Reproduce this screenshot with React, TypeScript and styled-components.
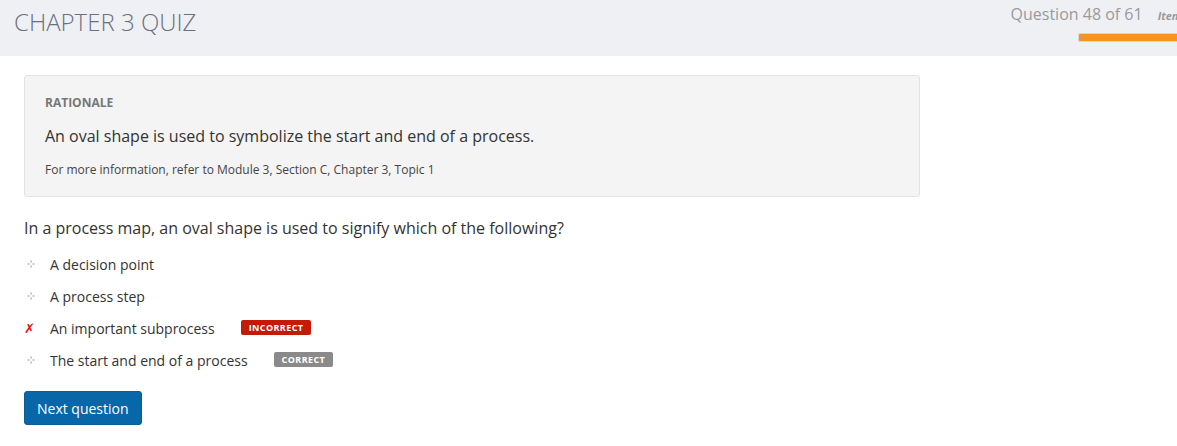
import React from "react";
import styled, { createGlobalStyle } from "styled-components";

const Global = createGlobalStyle`
  html, body { margin: 0; padding: 0; background: #fff; }
  body { font-family: "Open Sans", "Liberation Sans", Arial, sans-serif; color: #333; }
  * { box-sizing: border-box; }
`;

const Header = styled.header`
  height: 56px;
  background: #eff0f4;
  display: flex;
  justify-content: space-between;
  align-items: flex-start;
  overflow: hidden;
`;

const Title = styled.h1`
  margin: 6px 0 0 14px;
  font-size: 24px;
  line-height: 32px;
  font-weight: 300;
  color: #6b7080;
  letter-spacing: 0;
`;

const Progress = styled.div`
  display: flex;
  flex-direction: column;
  align-items: flex-end;
  padding-top: 3px;
`;

const ProgressText = styled.div`
  display: flex;
  align-items: baseline;
  gap: 15px;
  white-space: nowrap;
  margin-right: -10px;
`;

const Count = styled.span`
  font-size: 16px;
  line-height: 22px;
  color: #9a9a9a;
`;

const Items = styled.span`
  font-size: 11px;
  font-style: italic;
  font-weight: 700;
  color: #9a9a9a;
`;

const Track = styled.div`
  margin-top: 8px;
  width: 99px;
  height: 9px;
  border: 1px solid #d6d7da;
  border-right: none;
  border-radius: 2px 0 0 2px;
  background: #f7941d;
`;

const Main = styled.main`
  padding: 19px 24px 0;
`;

const Rationale = styled.section`
  width: 896px;
  background: #f4f4f4;
  border: 1px solid #e2e2e2;
  border-radius: 3px;
  padding: 18px 20px 17px 20px;
`;

const Label = styled.div`
  font-size: 12px;
  line-height: 18px;
  font-weight: 700;
  color: #777;
`;

const Explanation = styled.p`
  margin: 12px 0 0;
  font-size: 16px;
  line-height: 24px;
  color: #333;
`;

const Reference = styled.p`
  margin: 13px 0 0;
  font-size: 12px;
  line-height: 18px;
  color: #444;
`;

const Question = styled.p`
  margin: 19px 0 0;
  font-size: 16px;
  line-height: 24px;
  color: #333;
`;

const Options = styled.ul`
  list-style: none;
  margin: 14px 0 0;
  padding: 0;
  display: flex;
  flex-direction: column;
  gap: 12px;
`;

const Option = styled.li`
  display: flex;
  align-items: center;
  height: 20px;
  font-size: 14px;
  color: #333;
`;

const Marker = styled.span<{ $cross?: boolean }>`
  width: 26px;
  display: flex;
  align-items: center;
  padding-left: ${(p) => (p.$cross ? "0" : "3px")};
`;

const CrossGlyph = styled.span`
  font-family: "DejaVu Sans", sans-serif;
  font-size: 13px;
  line-height: 1;
  color: #e0140a;
  font-weight: 700;
`;

const Badge = styled.span<{ $tone: "bad" | "good" }>`
  display: inline-flex;
  align-items: center;
  justify-content: center;
  height: 15px;
  padding: 0 8px;
  margin-left: 26px;
  margin-bottom: 1px;
  border-radius: 2px;
  background: ${(p) => (p.$tone === "bad" ? "#c41a0a" : "#8a8a8a")};
  color: #fff;
  font-size: 9px;
  font-weight: 700;
  letter-spacing: 0.4px;
`;

const NextButton = styled.button`
  margin-top: 21px;
  height: 34px;
  padding: 0 12px;
  background: #0767a9;
  border: 1px solid #0b5b94;
  border-radius: 3px;
  color: #fff;
  font-family: inherit;
  font-size: 14px;
  cursor: pointer;
`;

const Dots = () => (
  <svg width="8" height="8" viewBox="0 0 8 8">
    <rect x="3" y="0.5" width="2" height="2" fill="#c8c8c8" />
    <rect x="0.5" y="3" width="2" height="2" fill="#c8c8c8" />
    <rect x="5.5" y="3" width="2" height="2" fill="#c8c8c8" />
    <rect x="3" y="5.5" width="2" height="2" fill="#c8c8c8" />
  </svg>
);

type Opt = { text: string; state?: "bad" | "good" };
const options: Opt[] = [
  { text: "A decision point" },
  { text: "A process step" },
  { text: "An important subprocess", state: "bad" },
  { text: "The start and end of a process", state: "good" },
];

export default function App() {
  return (
    <>
      <Global />
      <Header>
        <Title>CHAPTER 3 QUIZ</Title>
        <Progress>
          <ProgressText>
            <Count>Question 48 of 61</Count>
            <Items>Items</Items>
          </ProgressText>
          <Track />
        </Progress>
      </Header>
      <Main>
        <Rationale>
          <Label>RATIONALE</Label>
          <Explanation>An oval shape is used to symbolize the start and end of a process.</Explanation>
          <Reference>For more information, refer to Module 3, Section C, Chapter 3, Topic 1</Reference>
        </Rationale>
        <Question>In a process map, an oval shape is used to signify which of the following?</Question>
        <Options>
          {options.map((o) => (
            <Option key={o.text}>
              <Marker $cross={o.state === "bad"}>
                {o.state === "bad" ? <CrossGlyph>✗</CrossGlyph> : <Dots />}
              </Marker>
              {o.text}
              {o.state === "bad" && <Badge $tone="bad">INCORRECT</Badge>}
              {o.state === "good" && <Badge $tone="good">CORRECT</Badge>}
            </Option>
          ))}
        </Options>
        <NextButton>Next question</NextButton>
      </Main>
    </>
  );
}
